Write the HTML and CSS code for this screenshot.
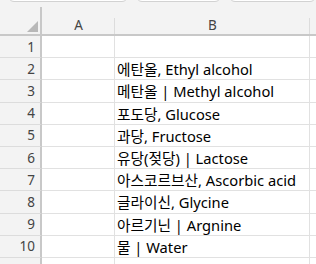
FILE: index.html
```html
<!DOCTYPE html>
<html lang="ko">
<head>
<meta charset="utf-8">
<link rel="stylesheet" href="styles.css">
</head>
<body>
<div class="tabs">
  <div class="tab tab1"></div>
  <div class="tab tab2"></div>
  <div class="tab tab3"></div>
</div>
<div class="sheet">
  <div class="corner"><span class="tri"></span></div>
  <div class="colhead">A</div>
  <div class="colhead">B</div>
  <div class="colhead last"></div>

  <div class="rowhead">1</div><div class="cell"></div><div class="cell"></div><div class="cell last"></div>
  <div class="rowhead">2</div><div class="cell"></div><div class="cell">에탄올, Ethyl alcohol</div><div class="cell last"></div>
  <div class="rowhead">3</div><div class="cell"></div><div class="cell">메탄올 | Methyl alcohol</div><div class="cell last"></div>
  <div class="rowhead">4</div><div class="cell"></div><div class="cell">포도당, Glucose</div><div class="cell last"></div>
  <div class="rowhead">5</div><div class="cell"></div><div class="cell">과당, Fructose</div><div class="cell last"></div>
  <div class="rowhead">6</div><div class="cell"></div><div class="cell">유당(젖당) | Lactose</div><div class="cell last"></div>
  <div class="rowhead">7</div><div class="cell"></div><div class="cell">아스코르브산, Ascorbic acid</div><div class="cell last"></div>
  <div class="rowhead">8</div><div class="cell"></div><div class="cell">글라이신, Glycine</div><div class="cell last"></div>
  <div class="rowhead">9</div><div class="cell"></div><div class="cell">아르기닌 | Argnine</div><div class="cell last"></div>
  <div class="rowhead">10</div><div class="cell"></div><div class="cell">물 | Water</div><div class="cell last"></div>
  <div class="rowhead tail"></div><div class="cell"></div><div class="cell"></div><div class="cell last"></div>
</div>
</body>
</html>
```
FILE: styles.css
```css
html, body {
  margin: 0;
  padding: 0;
  background: #ffffff;
  overflow: hidden;
}
body {
  width: 316px;
  height: 264px;
  font-family: "Noto Sans", "Noto Sans CJK KR", sans-serif;
}
.tabs {
  display: flex;
  height: 0;
  position: relative;
  z-index: 2;
}
.tab {
  height: 12px;
  margin-top: -10px;
  background: #ffffff;
  border: 1px solid #d2d2d2;
  border-radius: 6px;
  box-sizing: border-box;
}
.tab1 { margin-left: 8px; width: 124px; }
.tab2 { margin-left: 8px; width: 87px; }
.tab3 { margin-left: 8px; width: 90px; }

.sheet {
  display: grid;
  grid-template-columns: 42px 73px 195px 6px;
  grid-template-rows: 36px repeat(11, 22.2px);
  background: #f3f3f3;
}
.corner {
  background: #f3f3f3;
  border-right: 2px solid #c8c8c8;
  border-bottom: 2px solid #c8c8c8;
  margin-top: 7px;
  position: relative;
}
.tri {
  position: absolute;
  right: 2px;
  bottom: 2px;
  width: 0;
  height: 0;
  border-left: 11px solid transparent;
  border-bottom: 11px solid #b8b8b8;
}
.colhead {
  background: #f3f3f3;
  border-bottom: 2px solid #c8c8c8;
  display: flex;
  align-items: flex-end;
  justify-content: center;
  padding-bottom: 1px;
  font-size: 13.5px;
  color: #444444;
  position: relative;
  line-height: 16px;
}
.colhead::after {
  content: "";
  position: absolute;
  right: 0;
  top: 18px;
  bottom: 0;
  width: 1px;
  background: #dcdcdc;
}
.colhead.last::after { display: none; }
.rowhead {
  background: #f3f3f3;
  border-right: 2px solid #c8c8c8;
  border-bottom: 1px solid #dcdcdc;
  font-size: 13.5px;
  color: #444444;
  padding-right: 5px;
  display: flex;
  align-items: center;
  justify-content: flex-end;
}
.cell {
  background: #ffffff;
  border-right: 1px solid #e1e1e1;
  border-bottom: 1px solid #e1e1e1;
  font-size: 14.7px;
  color: #000000;
  display: flex;
  align-items: center;
  padding-left: 2px;
  white-space: nowrap;
  overflow: hidden;
}
.cell.last { border-right: none; }
```
